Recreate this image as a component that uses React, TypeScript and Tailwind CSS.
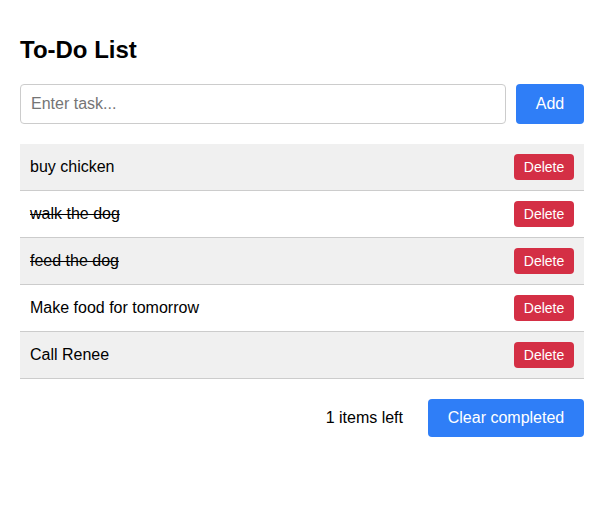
import { useState } from 'react'

interface Todo {
  id: number
  text: string
  done: boolean
}

const initialTodos: Todo[] = [
  { id: 1, text: 'buy chicken', done: false },
  { id: 2, text: 'walk the dog', done: true },
  { id: 3, text: 'feed the dog', done: true },
  { id: 4, text: 'Make food for tomorrow', done: false },
  { id: 5, text: 'Call Renee', done: false },
]

export default function App() {
  const [todos, setTodos] = useState<Todo[]>(initialTodos)
  const [input, setInput] = useState('')

  const addTodo = () => {
    if (!input.trim()) return
    setTodos([...todos, { id: Date.now(), text: input.trim(), done: false }])
    setInput('')
  }

  const left = 1

  return (
    <div className="min-h-[517px] bg-white pl-5 pr-[19px] pt-9 text-black font-['Liberation_Sans',Arial,sans-serif]">
      <h2 className="text-2xl font-bold leading-[28px] mb-5">To-Do List</h2>

      <div className="flex gap-[10px] mb-5">
        <input
          value={input}
          onChange={(e) => setInput(e.target.value)}
          placeholder="Enter task..."
          className="flex-1 h-10 px-[10px] text-base border border-[#ccc] rounded-[4px] outline-none placeholder:text-[#757575]"
        />
        <button
          onClick={addTodo}
          className="w-[68px] h-10 bg-[#2f7ef7] text-white text-base rounded-[4px]"
        >
          Add
        </button>
      </div>

      <ul>
        {todos.map((todo, i) => (
          <li
            key={todo.id}
            className={`flex items-center justify-between h-[47px] px-[10px] border-b border-[#ccc] ${
              i % 2 === 0 ? 'bg-[#f0f0f0]' : 'bg-white'
            }`}
          >
            <span
              onClick={() =>
                setTodos(todos.map((t) => (t.id === todo.id ? { ...t, done: !t.done } : t)))
              }
              className={`text-base ${todo.done ? 'line-through' : ''}`}
            >
              {todo.text}
            </span>
            <button
              onClick={() => setTodos(todos.filter((t) => t.id !== todo.id))}
              className="w-[60px] h-[26px] bg-[#d42f45] text-white text-sm rounded-[4px]"
            >
              Delete
            </button>
          </li>
        ))}
      </ul>

      <div className="flex items-center justify-end gap-[25px] mt-5">
        <span className="text-base">{left} items left</span>
        <button
          onClick={() => setTodos(todos.filter((t) => !t.done))}
          className="w-[156px] h-[38px] bg-[#2f7ef7] text-white text-base rounded-[4px]"
        >
          Clear completed
        </button>
      </div>
    </div>
  )
}
